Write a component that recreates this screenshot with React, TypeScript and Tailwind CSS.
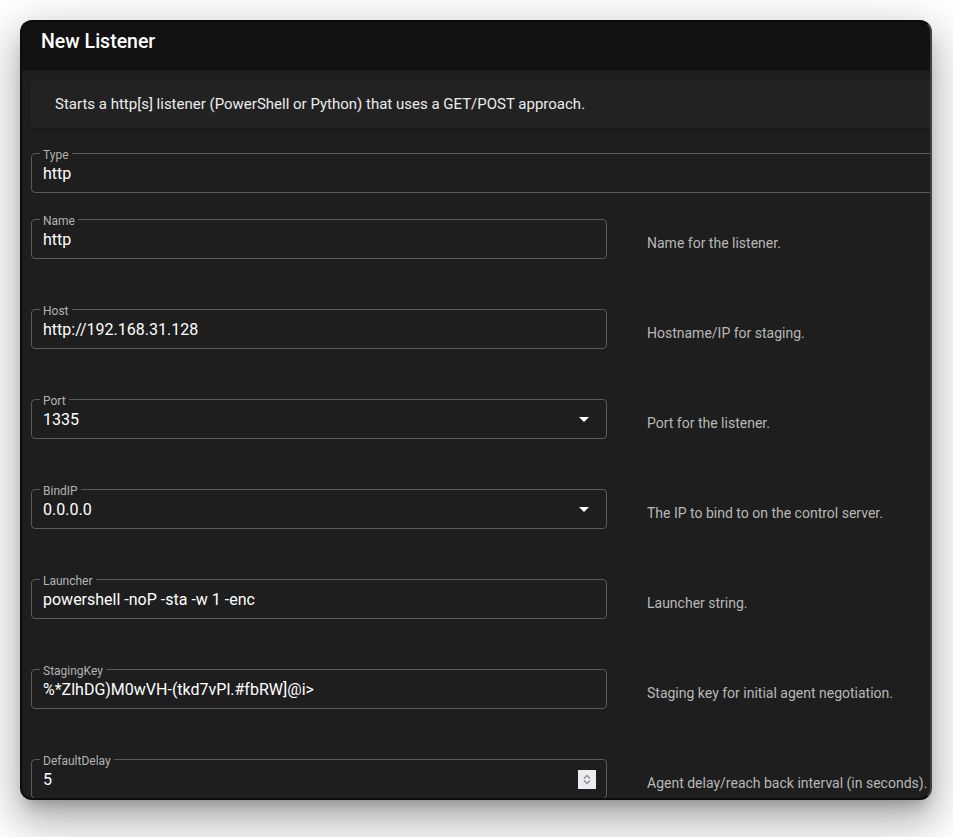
import type { ReactNode } from "react";

type Row = {
  label: string;
  value: string;
  help: string;
  kind?: "text" | "select" | "number";
};

const rows: Row[] = [
  { label: "Name", value: "http", help: "Name for the listener." },
  { label: "Host", value: "http://192.168.31.128", help: "Hostname/IP for staging." },
  { label: "Port", value: "1335", help: "Port for the listener.", kind: "select" },
  { label: "BindIP", value: "0.0.0.0", help: "The IP to bind to on the control server.", kind: "select" },
  { label: "Launcher", value: "powershell -noP -sta -w 1 -enc", help: "Launcher string." },
  { label: "StagingKey", value: "%*ZlhDG)M0wVH-(tkd7vPl.#fbRW]@i>", help: "Staging key for initial agent negotiation." },
  { label: "DefaultDelay", value: "5", help: "Agent delay/reach back interval (in seconds).", kind: "number" },
];

function OutlinedField({
  label,
  value,
  width,
  adornment,
}: {
  label: string;
  value: string;
  width: string;
  adornment?: ReactNode;
}) {
  return (
    <div className={`relative h-10 shrink-0 rounded border border-[#5a5a5a] ${width}`}>
      <span className="absolute -top-[5px] left-2 bg-[linear-gradient(#1e1e1e_0,#1e1e1e_70%,transparent_70%)] px-[3px] text-xs leading-3 text-[#b3b3b3]">
        {label}
      </span>
      <div className="flex h-full items-center pl-[11px] pr-[17px] pt-[1px] text-base text-white">
        <span className="flex-1 whitespace-nowrap">{value}</span>
        {adornment}
      </div>
    </div>
  );
}

function Caret() {
  return (
    <svg width="10" height="5" viewBox="0 0 10 5">
      <path d="M0 0h10L5 5z" fill="#ffffff" />
    </svg>
  );
}

function Spinner() {
  return (
    <div className="-mr-[7px] flex h-[19px] w-[18px] flex-col items-center justify-center gap-[1px] bg-[#ebebf0]">
      <svg width="8" height="5" viewBox="0 0 8 5">
        <path d="M1 4.5 4 1.5 7 4.5" stroke="#8a8a95" strokeWidth="1.3" fill="none" />
      </svg>
      <svg width="8" height="5" viewBox="0 0 8 5">
        <path d="M1 0.5 4 3.5 7 0.5" stroke="#8a8a95" strokeWidth="1.3" fill="none" />
      </svg>
    </div>
  );
}

export default function App() {
  return (
    <div className="min-h-screen bg-white p-5 font-['Roboto',sans-serif]">
      <div className="flex h-[780px] w-[912px] flex-col overflow-hidden rounded-xl border-2 border-[#0c0c0c] border-r-[#404040] bg-[#1e1e1e] shadow-[0_11px_15px_-7px_rgba(0,0,0,0.25),0_24px_38px_3px_rgba(0,0,0,0.18),0_9px_46px_8px_rgba(0,0,0,0.14)]">
        {/* Header */}
        <div className="flex h-12 shrink-0 items-center bg-[#121212] px-[19px] pb-[8px]">
          <h2 className="text-[19.5px] font-medium text-white">New Listener</h2>
        </div>

        {/* Body */}
        <div className="flex-1 overflow-hidden">
          <div className="ml-2 mt-[10px] flex h-12 w-[1000px] items-center rounded bg-[#222222] pl-[25px] shadow-[0_1px_3px_rgba(0,0,0,0.35)]">
            <p className="text-[15px] text-[#ececec]">
              Starts a http[s] listener (PowerShell or Python) that uses a GET/POST approach.
            </p>
          </div>

          <div className="ml-[9px] mt-[25px] flex flex-col">
            <OutlinedField label="Type" value="http" width="w-[1000px]" />

            <div className="mt-[26px] flex flex-col gap-[50px]">
              {rows.map((row) => (
                <div key={row.label} className="flex items-start gap-[40px]">
                  <OutlinedField
                    label={row.label}
                    value={row.value}
                    width="w-[576px]"
                    adornment={
                      row.kind === "select" ? <Caret /> : row.kind === "number" ? <Spinner /> : null
                    }
                  />
                  <p className="mt-[14px] whitespace-nowrap text-sm leading-5 text-[#b8b8b8]">
                    {row.help}
                  </p>
                </div>
              ))}
            </div>
          </div>
        </div>
      </div>
    </div>
  );
}
